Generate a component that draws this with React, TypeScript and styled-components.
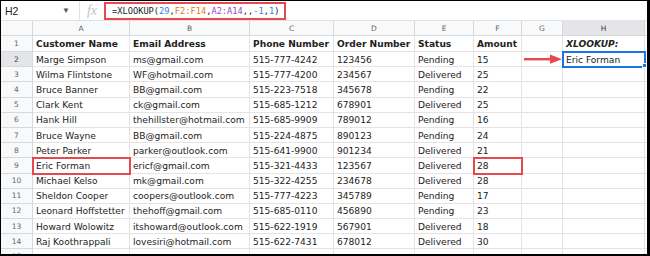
import React from 'react';
import styled, { createGlobalStyle, css } from 'styled-components';

const GlobalStyle = createGlobalStyle`
  html, body {
    margin: 0;
    padding: 0;
    background: #fff;
  }
  body {
    font-family: "DejaVu Sans", Verdana, sans-serif;
    color: #222;
  }
`;

const RED = '#e8474b';
const BLUE = '#1a73e8';

const Frame = styled.div`
  width: 650px;
  height: 256px;
  box-sizing: border-box;
  border-style: solid;
  border-color: #000;
  border-width: 1px 3px 2px 1px;
  overflow: hidden;
  background: #fff;
`;

const FormulaBar = styled.div`
  display: flex;
  align-items: center;
  height: 20px;
  box-sizing: border-box;
  border-bottom: 1px solid #e2e2e2;
`;

const NameBox = styled.div`
  width: 79px;
  height: 100%;
  box-sizing: border-box;
  padding: 0 9px 0 4px;
  display: flex;
  align-items: center;
  justify-content: space-between;
  border-right: 1px solid #e2e2e2;
  font-family: "Liberation Sans", Arial, sans-serif;
  font-size: 10.5px;
  color: #222;
`;

const Caret = styled.span`
  font-size: 8px;
  color: #555;
`;

const Fx = styled.div`
  width: 24px;
  text-align: center;
  font-family: "Liberation Serif", "Times New Roman", serif;
  font-style: italic;
  font-size: 14px;
  color: #c4c4c4;
`;

const FormulaInput = styled.div`
  width: 182px;
  height: 18px;
  box-sizing: border-box;
  border: 2px solid ${RED};
  padding-left: 6px;
  display: flex;
  align-items: center;
  font-family: "DejaVu Sans Mono", "Liberation Mono", monospace;
  font-size: 8.7px;
  color: #222;
  white-space: nowrap;
`;

const Token = styled.span<{ $kind: 'num' | 'r1' | 'r2' }>`
  color: ${(p) => (p.$kind === 'num' ? '#3b78d8' : p.$kind === 'r1' ? '#e8771f' : '#9a48c0')};
`;

const Sheet = styled.div`
  display: grid;
  grid-template-columns: 32px 97px 120px 84px 81px 59px 48px 41px 82px 1fr;
  grid-template-rows: 15px 16px repeat(14, 15.2px);
`;

const HeadCell = styled.div<{ $active?: boolean }>`
  box-sizing: border-box;
  display: flex;
  align-items: center;
  justify-content: center;
  background: ${(p) => (p.$active ? '#e3e5e8' : '#f8f9fa')};
  border-right: 1px solid #d6d8da;
  border-bottom: 1px solid #d6d8da;
  font-size: 7.5px;
  color: ${(p) => (p.$active ? '#444' : '#666')};
`;

const Cell = styled.div<{ $bold?: boolean; $italic?: boolean; $marked?: boolean; $selected?: boolean }>`
  position: relative;
  box-sizing: border-box;
  display: flex;
  align-items: center;
  padding: 1px 3px 0;
  border-right: 1px solid #e4e4e4;
  border-bottom: 1px solid #e4e4e4;
  font-size: 9.1px;
  font-weight: ${(p) => (p.$bold ? 700 : 400)};
  font-style: ${(p) => (p.$italic ? 'italic' : 'normal')};
  white-space: nowrap;
  overflow: hidden;
  ${(p) =>
    p.$marked &&
    css`
      overflow: visible;
      z-index: 2;
      outline: 2px solid ${RED};
      outline-offset: -1px;
    `}
  ${(p) =>
    p.$selected &&
    css`
      overflow: visible;
      z-index: 3;
      outline: 2px solid ${BLUE};
      outline-offset: -1px;
      &::after {
        content: '';
        position: absolute;
        right: -3px;
        bottom: -2px;
        width: 5px;
        height: 5px;
        background: ${BLUE};
        border: 1px solid #fff;
        box-sizing: border-box;
      }
    `}
`;

const Arrow = () => (
  <svg width="40" height="14" viewBox="0 0 40 14">
    <rect x="2" y="6" width="28" height="2.4" fill={RED} />
    <polygon points="28,2.6 40,7.2 28,11.8" fill={RED} />
  </svg>
);

const LETTERS = ['A', 'B', 'C', 'D', 'E', 'F', 'G', 'H', ''];

const HEADERS = ['Customer Name', 'Email Address', 'Phone Number', 'Order Number', 'Status', 'Amount'];

const ROWS = [
  ['Marge Simpson', 'ms@gmail.com', '515-777-4242', '123456', 'Pending', '15'],
  ['Wilma Flintstone', 'WF@hotmail.com', '515-777-4200', '234567', 'Delivered', '25'],
  ['Bruce Banner', 'BB@gmail.com', '515-223-7518', '345678', 'Pending', '22'],
  ['Clark Kent', 'ck@gmail.com', '515-685-1212', '678901', 'Delivered', '25'],
  ['Hank Hill', 'thehillster@hotmail.com', '515-685-9909', '789012', 'Pending', '16'],
  ['Bruce Wayne', 'BB@gmail.com', '515-224-4875', '890123', 'Pending', '24'],
  ['Peter Parker', 'parker@outlook.com', '515-641-9900', '901234', 'Delivered', '21'],
  ['Eric Forman', 'ericf@gmail.com', '515-321-4433', '123567', 'Delivered', '28'],
  ['Michael Kelso', 'mk@gmail.com', '515-322-4255', '234678', 'Delivered', '28'],
  ['Sheldon Cooper', 'coopers@outlook.com', '515-777-4223', '345789', 'Pending', '17'],
  ['Leonard Hoffstetter', 'thehoff@gmail.com', '515-685-0110', '456890', 'Pending', '23'],
  ['Howard Wolowitz', 'itshoward@outlook.com', '515-622-1919', '567901', 'Delivered', '18'],
  ['Raj Koothrappali', 'lovesiri@hotmail.com', '515-622-7431', '678012', 'Delivered', '30'],
  ['', '', '', '', '', ''],
];

const App = () => {
  return (
    <Frame>
      <GlobalStyle />
      <FormulaBar>
        <NameBox>
          H2
          <Caret>▼</Caret>
        </NameBox>
        <Fx>fx</Fx>
        <FormulaInput>
          =XLOOKUP(<Token $kind="num">29</Token>,<Token $kind="r1">F2:F14</Token>,
          <Token $kind="r2">A2:A14</Token>,,<Token $kind="num">-1</Token>,<Token $kind="num">1</Token>)
        </FormulaInput>
      </FormulaBar>
      <Sheet>
        <HeadCell />
        {LETTERS.map((l, i) => (
          <HeadCell key={i} $active={l === 'H'}>
            {l}
          </HeadCell>
        ))}

        <HeadCell>1</HeadCell>
        {HEADERS.map((h) => (
          <Cell key={h} $bold>
            {h}
          </Cell>
        ))}
        <Cell />
        <Cell $bold $italic>
          XLOOKUP:
        </Cell>
        <Cell />

        {ROWS.map((row, r) => (
          <React.Fragment key={r}>
            <HeadCell $active={r === 0}>{r + 2}</HeadCell>
            {row.map((v, c) => (
              <Cell key={c} $marked={r === 7 && (c === 0 || c === 5)}>
                {v}
              </Cell>
            ))}
            <Cell style={{ padding: 0 }}>{r === 0 && <Arrow />}</Cell>
            <Cell $selected={r === 0}>{r === 0 ? 'Eric Forman' : ''}</Cell>
            <Cell />
          </React.Fragment>
        ))}
      </Sheet>
    </Frame>
  );
};

export default App;
